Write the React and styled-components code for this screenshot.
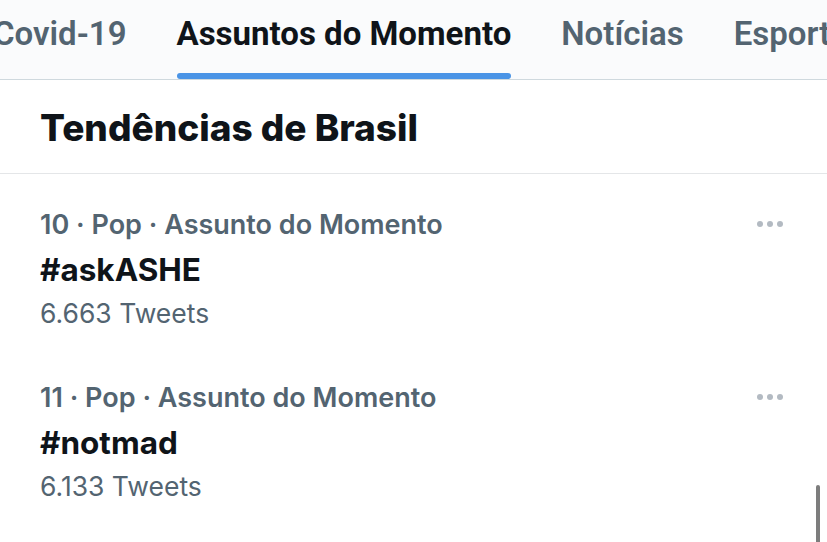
import React from 'react'
import styled, { createGlobalStyle } from 'styled-components'

const Global = createGlobalStyle`
  html, body { margin: 0; padding: 0; background: #fff; }
  body { width: 827px; height: 542px; overflow: hidden; font-family: Inter, "Liberation Sans", sans-serif; }
`

const Page = styled.div`
  position: relative;
  width: 827px;
  height: 542px;
  overflow: hidden;
  background: #fff;
`

const TabBar = styled.nav`
  display: flex;
  height: 80px;
  box-sizing: border-box;
  border-bottom: 1px solid #cfd9de;
  background: #fafbfc;
  overflow: hidden;
`

const TabStrip = styled.div`
  display: flex;
  gap: 50px;
  margin-left: -7px;
  white-space: nowrap;
`

const Tab = styled.div`
  position: relative;
  display: flex;
  align-items: flex-start;
  padding-top: 14px;
  font-family: Roboto, "Liberation Sans", sans-serif;
  font-weight: ${p => (p.active ? 700 : 600)};
  font-size: 33px;
  color: ${p => (p.active ? '#0f1419' : '#536471')};
`

const Underline = styled.span`
  position: absolute;
  left: 0;
  right: 0;
  bottom: 0;
  height: 6px;
  border-radius: 3px;
  background: #4a94e6;
`

const Header = styled.h2`
  margin: 0;
  height: 94px;
  box-sizing: border-box;
  padding: 26px 40px 0;
  font-size: 37px;
  line-height: 44px;
  font-weight: 800;
  color: #0f1419;
  border-bottom: 1px solid #e4e6e8;
`

const List = styled.div`
  display: flex;
  flex-direction: column;
`

const Trend = styled.div`
  position: relative;
  height: 173px;
  box-sizing: border-box;
  padding: 33px 40px 0;
`

const Meta = styled.div`
  font-size: 27px;
  font-weight: 600;
  color: #536471;
  line-height: 36px;
`

const Tag = styled.div`
  margin-top: 9px;
  font-size: 31.5px;
  font-weight: 700;
  color: #0f1419;
  line-height: 36px;
`

const Count = styled.div`
  margin-top: 7px;
  font-size: 26.5px;
  font-weight: 400;
  color: #536471;
  line-height: 36px;
`

const More = styled.div`
  position: absolute;
  right: 44px;
  top: 47px;
  display: flex;
  gap: 4px;
  span {
    width: 6px;
    height: 6px;
    border-radius: 50%;
    background: #b3bac2;
  }
`

const Scrollbar = styled.div`
  position: absolute;
  right: 7px;
  top: 485px;
  width: 4px;
  height: 60px;
  background: #7d7d7d;
  border-radius: 2px;
`

const tabs = ['Covid-19', 'Assuntos do Momento', 'Notícias', 'Esportes']

const trends = [
  { rank: 10, cat: 'Pop', tag: '#askASHE', count: '6.663' },
  { rank: 11, cat: 'Pop', tag: '#notmad', count: '6.133' },
]

export default function App() {
  return (
    <Page>
      <Global />
      <TabBar>
        <TabStrip>
          {tabs.map(t => (
            <Tab key={t} active={t === 'Assuntos do Momento'}>
              {t}
              {t === 'Assuntos do Momento' && <Underline />}
            </Tab>
          ))}
        </TabStrip>
      </TabBar>
      <Header>Tendências de Brasil</Header>
      <List>
        {trends.map(tr => (
          <Trend key={tr.rank}>
            <Meta>{tr.rank} · {tr.cat} · Assunto do Momento</Meta>
            <Tag>{tr.tag}</Tag>
            <Count>{tr.count} Tweets</Count>
            <More><span /><span /><span /></More>
          </Trend>
        ))}
      </List>
      <Scrollbar />
    </Page>
  )
}
